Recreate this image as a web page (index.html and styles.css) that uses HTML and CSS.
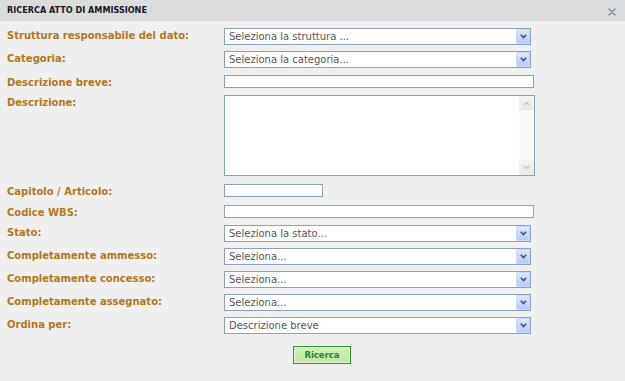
FILE: index.html
```html
<!DOCTYPE html>
<html lang="it">
<head>
<meta charset="utf-8">
<title>Ricerca atto di ammissione</title>
<link rel="stylesheet" href="styles.css">
</head>
<body>
<div class="dialog">
  <div class="titlebar">
    <span class="title">RICERCA ATTO DI AMMISSIONE</span>
    <svg class="close" width="8" height="8" viewBox="0 0 8 8"><path d="M1 1 L7 7 M7 1 L1 7" stroke="#7f8fa9" stroke-width="1.6" stroke-linecap="round"/></svg>
  </div>
  <div class="form">
    <div class="row">
      <span class="label">Struttura responsabile del dato:</span>
      <div class="select"><span class="select-text">Seleziona la struttura ...</span><span class="arrow"><svg width="7" height="5" viewBox="0 0 7 5"><path d="M0.8 0.8 L3.5 3.5 L6.2 0.8" fill="none" stroke="#3e5279" stroke-width="1.6"/></svg></span></div>
    </div>
    <div class="row row-wide">
      <span class="label">Categoria:</span>
      <div class="select"><span class="select-text">Seleziona la categoria...</span><span class="arrow"><svg width="7" height="5" viewBox="0 0 7 5"><path d="M0.8 0.8 L3.5 3.5 L6.2 0.8" fill="none" stroke="#3e5279" stroke-width="1.6"/></svg></span></div>
    </div>
    <div class="row row-text">
      <span class="label">Descrizione breve:</span>
      <div class="input"></div>
    </div>
    <div class="row row-area">
      <span class="label">Descrizione:</span>
      <div class="textarea">
        <div class="scrollbar">
          <span class="sb-btn"><svg width="7" height="5" viewBox="0 0 7 5"><path d="M0.8 4.2 L3.5 1.5 L6.2 4.2" fill="none" stroke="#c4c4bc" stroke-width="1.4"/></svg></span>
          <span class="sb-track"></span>
          <span class="sb-btn"><svg width="7" height="5" viewBox="0 0 7 5"><path d="M0.8 0.8 L3.5 3.5 L6.2 0.8" fill="none" stroke="#c4c4bc" stroke-width="1.4"/></svg></span>
        </div>
      </div>
    </div>
    <div class="row row-text-wide">
      <span class="label">Capitolo / Articolo:</span>
      <div class="input input-short"></div>
    </div>
    <div class="row row-text">
      <span class="label">Codice WBS:</span>
      <div class="input"></div>
    </div>
    <div class="row">
      <span class="label">Stato:</span>
      <div class="select"><span class="select-text">Seleziona la stato...</span><span class="arrow"><svg width="7" height="5" viewBox="0 0 7 5"><path d="M0.8 0.8 L3.5 3.5 L6.2 0.8" fill="none" stroke="#3e5279" stroke-width="1.6"/></svg></span></div>
    </div>
    <div class="row">
      <span class="label">Completamente ammesso:</span>
      <div class="select"><span class="select-text">Seleziona...</span><span class="arrow"><svg width="7" height="5" viewBox="0 0 7 5"><path d="M0.8 0.8 L3.5 3.5 L6.2 0.8" fill="none" stroke="#3e5279" stroke-width="1.6"/></svg></span></div>
    </div>
    <div class="row">
      <span class="label">Completamente concesso:</span>
      <div class="select"><span class="select-text">Seleziona...</span><span class="arrow"><svg width="7" height="5" viewBox="0 0 7 5"><path d="M0.8 0.8 L3.5 3.5 L6.2 0.8" fill="none" stroke="#3e5279" stroke-width="1.6"/></svg></span></div>
    </div>
    <div class="row">
      <span class="label">Completamente assegnato:</span>
      <div class="select"><span class="select-text">Seleziona...</span><span class="arrow"><svg width="7" height="5" viewBox="0 0 7 5"><path d="M0.8 0.8 L3.5 3.5 L6.2 0.8" fill="none" stroke="#3e5279" stroke-width="1.6"/></svg></span></div>
    </div>
    <div class="row">
      <span class="label">Ordina per:</span>
      <div class="select"><span class="select-text">Descrizione breve</span><span class="arrow"><svg width="7" height="5" viewBox="0 0 7 5"><path d="M0.8 0.8 L3.5 3.5 L6.2 0.8" fill="none" stroke="#3e5279" stroke-width="1.6"/></svg></span></div>
    </div>
  </div>
  <div class="actions">
    <button class="btn" type="button">Ricerca</button>
  </div>
</div>
</body>
</html>
```

FILE: styles.css
```css
html, body {
  margin: 0;
  padding: 0;
}
body {
  background: #efefef;
  font-family: "DejaVu Sans", Verdana, sans-serif;
  width: 625px;
  height: 381px;
  overflow: hidden;
}
.dialog {
  display: flex;
  flex-direction: column;
}
.titlebar {
  height: 21px;
  background: #dcdcdc;
  display: flex;
  align-items: center;
  justify-content: space-between;
  padding: 0 9px 0 7px;
  box-sizing: border-box;
}
.title {
  font-family: "DejaVu Sans Condensed", "DejaVu Sans", sans-serif;
  font-stretch: condensed;
  font-weight: bold;
  font-size: 9px;
  line-height: 21px;
  color: #141828;
}
.close {
  display: block;
  margin-top: 3px;
}
.form {
  display: flex;
  flex-direction: column;
  padding: 7px 0 0 7px;
}
.row {
  display: flex;
  align-items: flex-start;
  height: 23px;
}
.row-wide { height: 24px; }
.row-text { height: 20px; }
.row-text-wide { height: 21px; }
.row-area { height: 89px; }
.label {
  width: 217px;
  flex: none;
  font-size: 10px;
  font-weight: bold;
  line-height: 13px;
  color: #b3771c;
  padding-top: 1px;
}
.select {
  width: 307px;
  height: 17px;
  box-sizing: border-box;
  border: 1px solid #8aa2bf;
  background: #fff;
  display: flex;
  align-items: stretch;
  justify-content: space-between;
}
.select-text {
  font-size: 10px;
  line-height: 15px;
  color: #555;
  padding-left: 4px;
}
.arrow {
  width: 14px;
  box-sizing: border-box;
  border: 1px solid #c9d7fb;
  border-radius: 1px;
  background: linear-gradient(#dde7fd, #b8cbf6);
  display: flex;
  align-items: center;
  justify-content: center;
}
.arrow svg { display: block; }
.input {
  width: 310px;
  height: 13px;
  box-sizing: border-box;
  border: 1px solid #8aa2bf;
  background: #fff;
}
.input-short { width: 99px; }
.textarea {
  width: 311px;
  height: 81px;
  box-sizing: border-box;
  border: 1px solid #8aa2bf;
  background: #fff;
  display: flex;
  justify-content: flex-end;
}
.scrollbar {
  width: 15px;
  display: flex;
  flex-direction: column;
  background: #fbfbf6;
}
.sb-btn {
  height: 15px;
  box-sizing: border-box;
  border: 1px solid #f1f1ec;
  background: linear-gradient(#f4f4ef, #e8e8e2);
  display: flex;
  align-items: center;
  justify-content: center;
}
.sb-btn svg { display: block; }
.sb-track { flex: 1; }
.actions {
  padding: 3px 0 0 293px;
}
.btn {
  width: 58px;
  height: 18px;
  margin: 0;
  padding: 0;
  border: 1px solid #2a9c2a;
  background: linear-gradient(#d0efba, #bfe6a3);
  box-shadow: inset 0 0 0 1px #e2f6d3;
  font-family: "DejaVu Sans", Verdana, sans-serif;
  font-size: 8.5px;
  font-weight: bold;
  color: #1a8a22;
  line-height: 16px;
}
```
